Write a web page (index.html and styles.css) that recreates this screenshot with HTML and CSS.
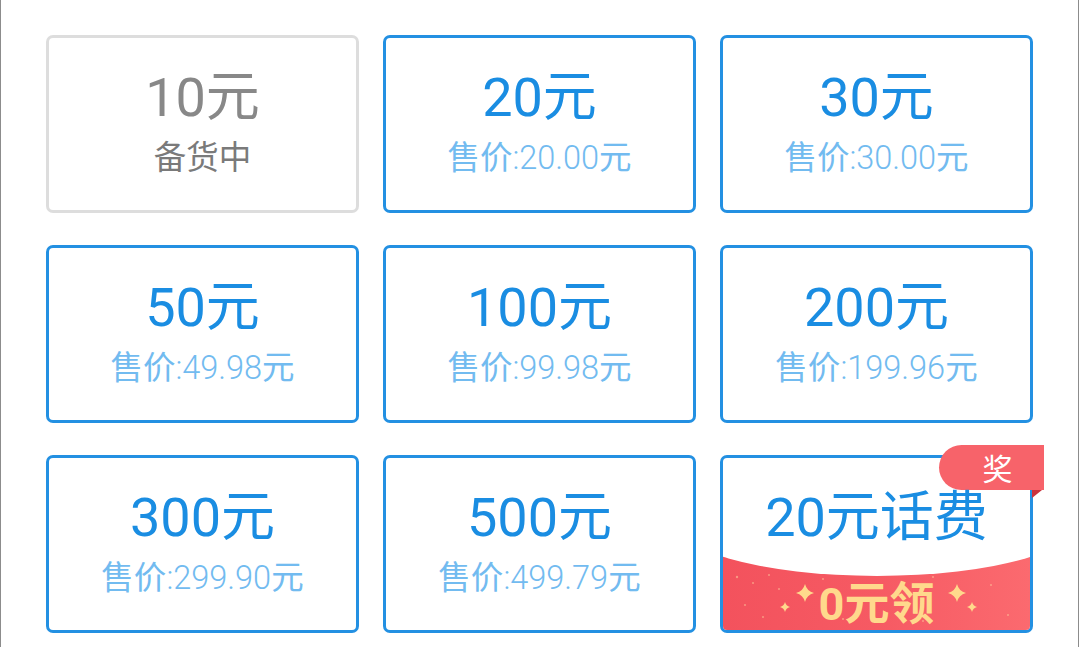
FILE: index.html
```html
<!DOCTYPE html>
<html lang="zh-CN">
<head>
<meta charset="utf-8">
<title>话费充值</title>
<link rel="stylesheet" href="styles.css">
</head>
<body>
<div class="screen">
  <div class="grid">
    <div class="card disabled">
      <div class="title">10元</div>
      <div class="sub">备货中</div>
    </div>
    <div class="card">
      <div class="title">20元</div>
      <div class="sub">售价<span class="num">:20.00</span>元</div>
    </div>
    <div class="card">
      <div class="title">30元</div>
      <div class="sub">售价<span class="num">:30.00</span>元</div>
    </div>
    <div class="card">
      <div class="title">50元</div>
      <div class="sub">售价<span class="num">:49.98</span>元</div>
    </div>
    <div class="card">
      <div class="title">100元</div>
      <div class="sub">售价<span class="num">:99.98</span>元</div>
    </div>
    <div class="card">
      <div class="title">200元</div>
      <div class="sub">售价<span class="num">:199.96</span>元</div>
    </div>
    <div class="card">
      <div class="title">300元</div>
      <div class="sub">售价<span class="num">:299.90</span>元</div>
    </div>
    <div class="card">
      <div class="title">500元</div>
      <div class="sub">售价<span class="num">:499.79</span>元</div>
    </div>
    <div class="card promo">
      <div class="promo-inner">
        <div class="promo-title">20元话费</div>
        <div class="promo-bottom">
          <svg class="sparkles" width="307" height="75" viewBox="0 0 307 75">
            <g fill="#ffd98c">
              <path d="M82 29 Q83.8 36.2 91 38 Q83.8 39.8 82 47 Q80.2 39.8 73 38 Q80.2 36.2 82 29 Z"/>
              <path d="M62 47 Q63 51 67 52 Q63 53 62 57 Q61 53 57 52 Q61 51 62 47 Z"/>
              <path d="M234 29 Q235.8 36.2 243 38 Q235.8 39.8 234 47 Q232.2 39.8 225 38 Q232.2 36.2 234 29 Z"/>
              <path d="M249 47 Q250 51 254 52 Q250 53 249 57 Q248 53 244 52 Q248 51 249 47 Z"/>
            </g>
            <g fill="#ffd0a0" opacity="0.55">
              <circle cx="14" cy="22" r="1.2"/>
              <circle cx="30" cy="28" r="1"/>
              <circle cx="46" cy="20" r="1"/>
              <circle cx="22" cy="50" r="1"/>
              <circle cx="40" cy="62" r="1"/>
              <circle cx="56" cy="34" r="1"/>
              <circle cx="100" cy="24" r="1"/>
              <circle cx="120" cy="64" r="1"/>
              <circle cx="210" cy="22" r="1"/>
              <circle cx="268" cy="30" r="1"/>
              <circle cx="285" cy="60" r="1"/>
              <circle cx="200" cy="66" r="1"/>
            </g>
          </svg>
          <span class="promo-text">0元领</span>
        </div>
      </div>
      <div class="badge">奖</div>
      <div class="badge-fold"></div>
    </div>
  </div>
</div>
</body>
</html>
```

FILE: styles.css
```css
html, body {
  margin: 0;
  padding: 0;
  background: #ffffff;
}

.screen {
  width: 1077px;
  height: 647px;
  border-left: 1px solid #8c8c8c;
  border-right: 1px solid #8c8c8c;
  box-sizing: content-box;
  overflow: hidden;
  font-family: Roboto, "Noto Sans CJK SC", sans-serif;
}

.grid {
  display: grid;
  grid-template-columns: repeat(3, 313px);
  grid-auto-rows: 178px;
  column-gap: 24px;
  row-gap: 32px;
  padding: 35px 0 0 45px;
}

.card {
  box-sizing: border-box;
  border: 3px solid #2390e2;
  border-radius: 7px;
  background: #fff;
  display: flex;
  flex-direction: column;
  align-items: center;
  justify-content: center;
  gap: 12px;
}

.title {
  font-size: 54px;
  line-height: 56px;
  color: #1a8de2;
  white-space: nowrap;
}

.sub {
  font-size: 32.5px;
  line-height: 40px;
  color: #72bbf0;
  white-space: nowrap;
}

.sub .num {
  font-weight: 300;
}

.card.disabled {
  border-color: #dddddd;
}

.card.disabled .title {
  color: #888888;
}

.card.disabled .sub {
  color: #7a7a7a;
}

/* promo card */
.card.promo {
  position: relative;
  justify-content: flex-start;
  gap: 0;
}

.promo-inner {
  width: 100%;
  height: 100%;
  border-radius: 4px;
  overflow: hidden;
  display: flex;
  flex-direction: column;
  align-items: center;
}

.promo-title {
  position: relative;
  z-index: 1;
  font-size: 54px;
  line-height: 56px;
  color: #1a8de2;
  padding-top: 32px;
  white-space: nowrap;
}

.promo-bottom {
  margin-top: auto;
  width: 100%;
  height: 75px;
  position: relative;
  background: linear-gradient(90deg, #f3525d 0%, #f65a63 50%, #fb6a6f 100%);
  display: flex;
  align-items: center;
  justify-content: center;
}

.promo-bottom::before {
  content: "";
  position: absolute;
  left: 50%;
  top: -99px;
  width: 420px;
  height: 120px;
  margin-left: -210px;
  background: #ffffff;
  border-radius: 50%;
}

.sparkles {
  position: absolute;
  left: 0;
  top: 0;
}

.promo-text {
  position: relative;
  font-size: 45px;
  line-height: 46px;
  font-weight: 700;
  color: #ffd98c;
  padding-top: 24px;
}

.badge {
  position: absolute;
  top: -13px;
  right: -14px;
  width: 105px;
  height: 45px;
  box-sizing: border-box;
  padding-left: 12px;
  background: #f7636a;
  border-radius: 23px 0 0 23px;
  color: #ffffff;
  font-family: "Noto Sans CJK SC", sans-serif;
  font-size: 30px;
  line-height: 45px;
  text-align: center;
}

.badge-fold {
  position: absolute;
  top: 32px;
  right: -12px;
  width: 0;
  height: 0;
  border-top: 8px solid #c9333d;
  border-right: 10px solid transparent;
}
```
